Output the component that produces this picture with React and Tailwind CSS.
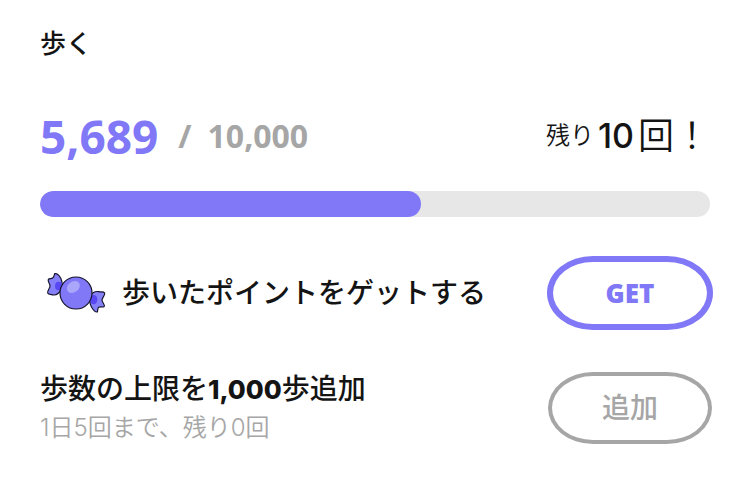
import React from 'react';

const walk = {
  steps: 5689,
  limit: 10000,
  remaining: 10,
};

function Candy() {
  return (
    <svg viewBox="12 0 216 180" className="w-[72px] h-[60px] shrink-0" aria-hidden="true">
      <g stroke="#15132b" strokeWidth="3.5" strokeLinejoin="round" strokeLinecap="round">
        <path
          d="M77 79C80 66 79 56 74 45C69 36 62 31 56 32C55 38 54 42 50 45C46 48 41 46 37 49C34 54 42 62 42 68C43 76 33 82 35 90C37 95 46 94 53 96C62 97 69 91 77 79Z"
          fill="#8580f8"
        />
        <path
          d="M163 98C160 110 161 122 166 131C171 140 177 148 184 147C186 142 184 136 188 133C193 130 202 134 205 130C207 125 198 118 198 111C198 104 208 97 206 90C203 85 196 88 188 86C177 84 170 88 163 98Z"
          fill="#8580f8"
        />
      </g>
      <ellipse cx="68" cy="69" rx="11" ry="13" fill="#5748f3" />
      <ellipse cx="173" cy="110" rx="11" ry="14" fill="#5748f3" />
      <circle cx="120" cy="90" r="48" fill="#8078f7" stroke="#15132b" strokeWidth="3.5" />
      <ellipse cx="112" cy="72" rx="21" ry="16" transform="rotate(-35 112 72)" fill="#aaa6fa" />
    </svg>
  );
}

export default function App() {
  const percent = (walk.steps / walk.limit) * 100;

  return (
    <main className="min-h-screen bg-white px-10 pt-6 pb-10 text-[#141414] font-['Inter','Noto_Sans_CJK_JP',sans-serif]">
      <h1 className="text-[26px] leading-10 font-medium">歩く</h1>

      {/* Step count */}
      <div className="mt-10 flex items-center justify-between whitespace-nowrap">
        <p className="flex items-center font-['Open_Sans',sans-serif] font-bold leading-16">
          <span className="text-[46px] text-[#8078f7]">{walk.steps.toLocaleString('en-US')}</span>
          <span className="ml-5 text-[32px] text-[#a6a6a6]">/</span>
          <span className="ml-4 text-[32px] text-[#a6a6a6]">{walk.limit.toLocaleString('en-US')}</span>
        </p>
        <p className="flex items-center font-[350] leading-16">
          <span className="text-2xl">残り</span>
          <span className="mx-1 text-[34px] font-medium">{walk.remaining}</span>
          <span className="text-4xl">回！</span>
        </p>
      </div>

      {/* Progress */}
      <div
        role="progressbar"
        aria-label="歩く"
        aria-valuenow={walk.steps}
        aria-valuemax={walk.limit}
        className="mt-[23px] h-[26px] overflow-hidden rounded-full bg-[#e7e7e7]"
      >
        <div className="h-full rounded-full bg-[#8078f7]" style={{ width: `${percent}%` }} />
      </div>

      {/* Points */}
      <div className="-mr-[3px] mt-[39px] flex items-center justify-between">
        <div className="flex items-center gap-[10px]">
          <Candy />
          <p className="text-[28px] leading-10 font-medium whitespace-nowrap">歩いたポイントをゲットする</p>
        </div>
        <button
          type="button"
          className="h-[74px] w-[166px] rounded-[46px/37px] border-6 border-[#8078f7] font-['Open_Sans',sans-serif] text-[26px] font-extrabold text-[#8078f7]"
        >
          GET
        </button>
      </div>

      {/* Step limit */}
      <div className="-mr-0.5 mt-[39px] flex items-center justify-between">
        <div className="whitespace-nowrap">
          <p className="text-[28px] leading-10 font-medium">
            歩数の上限を<span className="text-[26px] font-extrabold">1,000</span>歩追加
          </p>
          <p className="text-2xl leading-9 font-[350] text-[#a6a6a6]">1日5回まで、残り0回</p>
        </div>
        <button
          type="button"
          className="h-[72px] w-[164px] rounded-[45px/36px] border-4 border-[#a6a6a6] text-[28px] font-medium text-[#a6a6a6]"
        >
          追加
        </button>
      </div>
    </main>
  );
}
